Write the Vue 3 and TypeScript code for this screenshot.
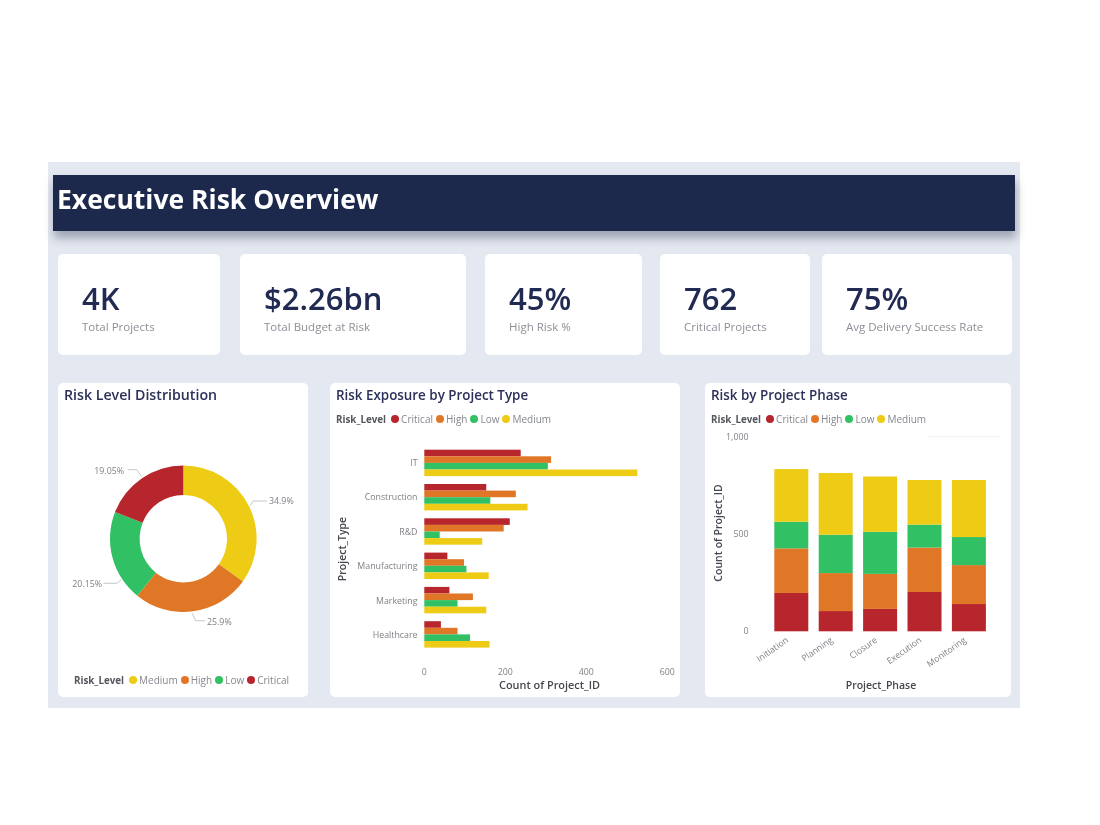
<script setup lang="ts">
type Level = 'Critical' | 'High' | 'Low' | 'Medium'

const colors: Record<Level, string> = {
  Critical: '#b7262c',
  High: '#e07726',
  Low: '#31c063',
  Medium: '#eecb14',
}
const levels: Level[] = ['Critical', 'High', 'Low', 'Medium']

const kpis = [
  { value: '4K', label: 'Total Projects' },
  { value: '$2.26bn', label: 'Total Budget at Risk' },
  { value: '45%', label: 'High Risk %' },
  { value: '762', label: 'Critical Projects' },
  { value: '75%', label: 'Avg Delivery Success Rate' },
]

// donut, local to its svg
const cx = 125.3
const cy = 129.7
const outer = 73.3
const inner = 43.7

const shares: { level: Level; pct: number }[] = [
  { level: 'Medium', pct: 34.9 },
  { level: 'High', pct: 25.9 },
  { level: 'Low', pct: 20.15 },
  { level: 'Critical', pct: 19.05 },
]

function point(r: number, pct: number) {
  const a = (pct / 100) * Math.PI * 2 - Math.PI / 2
  return `${(cx + r * Math.cos(a)).toFixed(2)} ${(cy + r * Math.sin(a)).toFixed(2)}`
}

let running = 0
const slices = shares.map((s) => {
  const from = running
  const to = running + s.pct
  running = to
  const large = s.pct > 50 ? 1 : 0
  return {
    level: s.level,
    d: `M${point(outer, from)} A${outer} ${outer} 0 ${large} 1 ${point(outer, to)} L${point(inner, to)} A${inner} ${inner} 0 ${large} 0 ${point(inner, from)} Z`,
  }
})

const donutLabels = [
  { text: '34.9%', x: 211, y: 95, anchor: 'start', line: '192 96.7 195.3 92 208.7 92' },
  { text: '25.9%', x: 149, y: 215.7, anchor: 'start', line: '134.3 204.3 137.7 211.7 147 211.7' },
  { text: '20.15%', x: 44, y: 178, anchor: 'end', line: '45.3 174.3 58.7 174.3 63 171' },
  { text: '19.05%', x: 66, y: 65, anchor: 'end', line: '69.7 60.7 78.7 60.7 83.7 67.7' },
]

// clustered bars
const pxPerUnitH = 0.405
const types = [
  { name: 'IT', values: [238, 313, 305, 526] },
  { name: 'Construction', values: [153, 226, 163, 255] },
  { name: 'R&D', values: [211, 196, 38, 143] },
  { name: 'Manufacturing', values: [57, 98, 104, 159] },
  { name: 'Marketing', values: [62, 120, 82, 153] },
  { name: 'Healthcare', values: [41, 82, 113, 161] },
]
const hBars = types.flatMap((t, i) =>
  t.values.map((v, j) => ({
    key: `${t.name}-${j}`,
    x: 94.3,
    y: 20.7 + i * 34.3 + j * 6.6,
    w: v * pxPerUnitH,
    fill: colors[levels[j]],
  })),
)
const hTicks = [0, 200, 400, 600]

// stacked columns
const pxPerUnitV = 0.1947
const baseline = 202.3
const phases = [
  { name: 'Initiation', values: [197, 229, 137, 270] },
  { name: 'Planning', values: [104, 195, 197, 317] },
  { name: 'Closure', values: [115, 180, 216, 284] },
  { name: 'Execution', values: [202, 228, 118, 229] },
  { name: 'Monitoring', values: [140, 200, 144, 293] },
]
const columns = phases.map((p, i) => {
  let top = baseline
  const x = 69.3 + i * 44.4
  return {
    name: p.name,
    labelX: x + 13,
    segments: p.values.map((v, j) => {
      const h = v * pxPerUnitV
      top -= h
      return { key: `${p.name}-${j}`, x, y: top, h, fill: colors[levels[j]] }
    }),
  }
})
const vTicks = [
  { text: '1,000', y: 7.7 },
  { text: '500', y: 105 },
  { text: '0', y: 202.3 },
]
</script>

<template>
  <main class="board">
    <header class="banner">
      <h1>Executive Risk Overview</h1>
    </header>

    <section class="kpis">
      <div v-for="k in kpis" :key="k.label" class="kpi">
        <div class="kpi-value">{{ k.value }}</div>
        <div class="kpi-label">{{ k.label }}</div>
      </div>
    </section>

    <section class="charts">
      <article class="card donut-card">
        <h2>Risk Level Distribution</h2>
        <svg width="250" height="261" viewBox="0 0 250 261">
          <path v-for="s in slices" :key="s.level" :d="s.d" :fill="colors[s.level]" />
          <g v-for="l in donutLabels" :key="l.text">
            <polyline :points="l.line" class="leader" />
            <text :x="l.x" :y="l.y" :text-anchor="l.anchor" class="tick">{{ l.text }}</text>
          </g>
        </svg>
        <div class="legend centered">
          <b>Risk_Level</b>
          <span v-for="s in shares" :key="s.level" class="entry">
            <i :style="{ background: colors[s.level] }"></i>{{ s.level }}
          </span>
        </div>
      </article>

      <article class="card bars-card">
        <h2>Risk Exposure by Project Type</h2>
        <div class="legend">
          <b>Risk_Level</b>
          <span v-for="l in levels" :key="l" class="entry">
            <i :style="{ background: colors[l] }"></i>{{ l }}
          </span>
        </div>
        <svg width="350" height="268" viewBox="0 0 350 268">
          <rect
            v-for="b in hBars"
            :key="b.key"
            :x="b.x"
            :y="b.y"
            :width="b.w"
            height="6.6"
            :fill="b.fill"
          />
          <text
            v-for="(t, i) in types"
            :key="t.name"
            x="87.5"
            :y="33.9 + i * 34.5"
            text-anchor="end"
            class="tick mid"
          >{{ t.name }}</text>
          <text
            v-for="t in hTicks"
            :key="t"
            :x="94.3 + t * pxPerUnitH"
            y="242.5"
            text-anchor="middle"
            class="tick mid"
          >{{ t }}</text>
          <text x="219.5" y="255.5" text-anchor="middle" class="axis wide mid">Count of Project_ID</text>
          <text transform="translate(12.3 120) rotate(-90)" text-anchor="middle" class="axis mid">Project_Type</text>
        </svg>
      </article>

      <article class="card stack-card">
        <h2>Risk by Project Phase</h2>
        <div class="legend">
          <b>Risk_Level</b>
          <span v-for="l in levels" :key="l" class="entry">
            <i :style="{ background: colors[l] }"></i>{{ l }}
          </span>
        </div>
        <svg width="306" height="268" viewBox="0 0 306 268">
          <line x1="223" y1="7.7" x2="296" y2="7.7" class="grid" />
          <text
            v-for="t in vTicks"
            :key="t.text"
            x="43.5"
            :y="t.y"
            text-anchor="end"
            class="tick mid"
          >{{ t.text }}</text>
          <g v-for="c in columns" :key="c.name">
            <rect
              v-for="s in c.segments"
              :key="s.key"
              :x="s.x"
              :y="s.y"
              width="34"
              :height="s.h"
              :fill="s.fill"
            />
            <text
              :transform="`translate(${c.labelX} 210) rotate(-35)`"
              text-anchor="end"
              class="tick mid"
            >{{ c.name }}</text>
          </g>
          <text x="176" y="255.5" text-anchor="middle" class="axis mid">Project_Phase</text>
          <text transform="translate(12.7 104) rotate(-90)" text-anchor="middle" class="axis mid">Count of Project_ID</text>
        </svg>
      </article>
    </section>
  </main>
</template>

<style>
html,
body {
  background: #fff;
}
</style>

<style scoped>
.board {
  box-sizing: border-box;
  width: 972px;
  height: 546px;
  margin: 162px 0 0 48px;
  padding: 13px 5px 0;
  background: #e4e8f1;
  font-family: 'Open Sans', 'Noto Sans', sans-serif;
  filter: blur(0.35px);
}

.banner {
  height: 56px;
  display: flex;
  align-items: center;
  padding-left: 4px;
  background: #1c294d;
  box-shadow: 1px 7px 9px rgba(50, 60, 85, 0.4);
}

h1 {
  margin: 0 0 8px;
  color: #fff;
  font-size: 26.5px;
  font-weight: 700;
}

.kpis {
  display: flex;
  margin: 23px 0 0 5px;
}

.kpi {
  box-sizing: border-box;
  height: 101px;
  padding: 25px 0 0 24px;
  background: #fff;
  border-radius: 5px;
}

.kpi:nth-child(1) { width: 162px; }
.kpi:nth-child(2) { width: 226px; margin-left: 20px; }
.kpi:nth-child(3) { width: 157px; margin-left: 19px; }
.kpi:nth-child(4) { width: 150px; margin-left: 18px; }
.kpi:nth-child(5) { width: 190px; margin-left: 12px; }

.kpi-value {
  color: #212a52;
  font-size: 31px;
  font-weight: 550;
  line-height: 38px;
}

.kpi-label {
  margin-top: 2px;
  color: #8c8f96;
  font-size: 11.5px;
  line-height: 16px;
}

.charts {
  display: flex;
  margin: 28px 0 0 5px;
}

.card {
  height: 314px;
  background: #fff;
  border-radius: 5px;
}

.card svg {
  display: block;
}

.donut-card { width: 250px; }
.bars-card { width: 350px; margin-left: 22px; }
.stack-card { width: 306px; margin-left: 25px; }

h2 {
  height: 26px;
  margin: 0;
  padding: 2px 0 0 6px;
  box-sizing: border-box;
  color: #2b3159;
  font-size: 13.4px;
  font-weight: 600;
  line-height: 20px;
}

.donut-card h2 {
  font-size: 14.2px;
}

.legend {
  display: flex;
  align-items: center;
  height: 20px;
  padding-left: 6px;
  color: #85878d;
  font-size: 10px;
}

.legend.centered {
  justify-content: center;
  padding-left: 0;
}

.legend b {
  margin-right: 5px;
  color: #55575e;
  font-size: 9.8px;
  font-weight: 700;
}

.entry {
  display: flex;
  align-items: center;
  margin-right: 3px;
}

.entry i {
  width: 8px;
  height: 8px;
  margin-right: 2px;
  border-radius: 50%;
}

.tick {
  fill: #7f8187;
  font-size: 8.8px;
}

.axis {
  fill: #45474e;
  font-size: 10.5px;
  font-weight: 600;
}

.axis.wide {
  font-size: 10.9px;
}

.mid {
  dominant-baseline: central;
}

.leader {
  fill: none;
  stroke: #b5b7bc;
  stroke-width: 0.8;
}

.grid {
  stroke: #f1f2f5;
  stroke-width: 1;
}
</style>
